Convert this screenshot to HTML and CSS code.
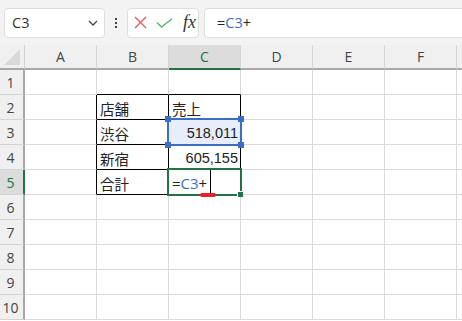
FILE: index.html
```html
<!DOCTYPE html>
<html>
<head>
<title>Sheet</title>
<link rel="stylesheet" href="styles.css">
</head>
<body>

<div class="toolbar">
  <div class="namebox">
    <span>C3</span>
    <svg class="chev" width="10" height="6" viewBox="0 0 10 6"><path d="M1 1 L5 5 L9 1" fill="none" stroke="#444" stroke-width="1.3"/></svg>
  </div>
  <div class="dots"><i></i><i></i><i></i></div>
  <div class="iconbox">
    <svg width="13" height="13" viewBox="0 0 13 13"><path d="M1 1 L12 12 M12 1 L1 12" stroke="#e35d5d" stroke-width="1.4"/></svg>
    <svg width="17" height="10" viewBox="0 0 17 10"><path d="M1 4.5 L5.5 9 L16 0.8" fill="none" stroke="#5cb56b" stroke-width="1.4"/></svg>
    <span class="fx">fx</span>
  </div>
  <div class="formula">=<span class="ref">C3</span>+</div>
</div>

<div class="sheet">
  <div class="corner"><span class="tri"></span></div>
  <div class="colhead">A</div>
  <div class="colhead">B</div>
  <div class="colhead active">C</div>
  <div class="colhead">D</div>
  <div class="colhead">E</div>
  <div class="colhead">F</div>
  <div class="colhead rest"></div>

  <div class="rowhead">1</div>
  <div class="cell"></div><div class="cell bb"></div><div class="cell bb"></div><div class="cell"></div><div class="cell"></div><div class="cell"></div><div class="cell rest"></div>

  <div class="rowhead">2</div>
  <div class="cell br"></div><div class="cell box">店舗</div><div class="cell box">売上</div><div class="cell"></div><div class="cell"></div><div class="cell"></div><div class="cell rest"></div>

  <div class="rowhead">3</div>
  <div class="cell br"></div><div class="cell box">渋谷</div><div class="cell box num selected">518,011<span class="sel"><i class="h tl"></i><i class="h tr"></i><i class="h bl"></i><i class="h brc"></i></span></div><div class="cell"></div><div class="cell"></div><div class="cell"></div><div class="cell rest"></div>

  <div class="rowhead">4</div>
  <div class="cell br"></div><div class="cell box">新宿</div><div class="cell box num">605,155</div><div class="cell"></div><div class="cell"></div><div class="cell"></div><div class="cell rest"></div>

  <div class="rowhead active">5</div>
  <div class="cell br"></div><div class="cell box">合計</div><div class="cell box editing"><span class="edit">=<span class="ref">C3</span>+</span><span class="act"><i class="fill"></i></span><span class="squiggle"></span></div><div class="cell"></div><div class="cell"></div><div class="cell"></div><div class="cell rest"></div>

  <div class="rowhead">6</div>
  <div class="cell"></div><div class="cell"></div><div class="cell"></div><div class="cell"></div><div class="cell"></div><div class="cell"></div><div class="cell rest"></div>

  <div class="rowhead">7</div>
  <div class="cell"></div><div class="cell"></div><div class="cell"></div><div class="cell"></div><div class="cell"></div><div class="cell"></div><div class="cell rest"></div>

  <div class="rowhead">8</div>
  <div class="cell"></div><div class="cell"></div><div class="cell"></div><div class="cell"></div><div class="cell"></div><div class="cell"></div><div class="cell rest"></div>

  <div class="rowhead">9</div>
  <div class="cell"></div><div class="cell"></div><div class="cell"></div><div class="cell"></div><div class="cell"></div><div class="cell"></div><div class="cell rest"></div>

  <div class="rowhead">10</div>
  <div class="cell"></div><div class="cell"></div><div class="cell"></div><div class="cell"></div><div class="cell"></div><div class="cell"></div><div class="cell rest"></div>
</div>

</body>
</html>
```

FILE: styles.css
```css
* {
  box-sizing: border-box;
}

body {
  margin: 0;
  width: 462px;
  height: 321px;
  overflow: hidden;
  background: #ffffff;
  font-family: "Liberation Sans", "Noto Sans CJK JP", sans-serif;
  color: #222;
}

.toolbar {
  height: 45px;
  background: #f3f3f3;
  display: flex;
  align-items: center;
  padding-left: 4px;
}

.namebox {
  width: 101px;
  height: 30px;
  background: #fff;
  border: 1px solid #dedede;
  border-radius: 4px;
  display: flex;
  align-items: center;
  justify-content: space-between;
  padding: 0 6px 0 7px;
  font-size: 15px;
  color: #333;
}

.namebox span {
  font-family: "Open Sans", sans-serif;
  font-size: 14.5px;
}

.dots {
  width: 22px;
  display: flex;
  flex-direction: column;
  align-items: center;
  gap: 2px;
}

.dots i {
  width: 2px;
  height: 2px;
  background: #444;
}

.iconbox {
  width: 72px;
  height: 30px;
  background: #fff;
  border: 1px solid #dedede;
  border-radius: 4px;
  display: flex;
  align-items: center;
  padding-left: 6px;
  gap: 9px;
}

.fx {
  font-family: "Liberation Serif", serif;
  font-style: italic;
  font-size: 18px;
  color: #333;
  margin-left: 1px;
}

.formula {
  flex: 1;
  height: 30px;
  margin-left: 5px;
  background: #fff;
  border: 1px solid #dedede;
  border-right: none;
  border-radius: 4px 0 0 4px;
  display: flex;
  align-items: center;
  padding-left: 12px;
  font-family: "Open Sans", sans-serif;
  font-size: 14.5px;
  color: #222;
}

.ref {
  color: #3a6fc4;
}

.sheet {
  display: grid;
  grid-template-columns: 25px repeat(6, 72px) 1fr;
  grid-template-rows: 25px repeat(10, 25px) 1fr;
}

.corner {
  background: #f0f0f0;
  border-right: 1px solid #d0d0d0;
  border-bottom: 2px solid #a8a8a8;
  position: relative;
}

.tri {
  position: absolute;
  right: 4px;
  bottom: 3px;
  width: 0;
  height: 0;
  border-left: 16px solid transparent;
  border-bottom: 16px solid #d9d9d9;
}

.colhead {
  background: #f0f0f0;
  border-right: 1px solid #d4d4d4;
  border-bottom: 2px solid #a8a8a8;
  display: flex;
  align-items: center;
  justify-content: center;
  font-family: "Open Sans", sans-serif;
  font-size: 14px;
  color: #444;
}

.colhead.active {
  background: #dcdcdc;
  border-bottom: 2px solid #217346;
  color: #217346;
}

.colhead.rest {
  border-right: none;
}

.rowhead {
  background: #f0f0f0;
  border-right: 2px solid #a8a8a8;
  border-bottom: 1px solid #d4d4d4;
  display: flex;
  align-items: center;
  justify-content: center;
  padding-right: 2px;
  font-family: "Open Sans", sans-serif;
  font-size: 14px;
  color: #444;
}

.rowhead.active {
  background: #dcdcdc;
  border-right: 2px solid #217346;
  color: #217346;
}

.cell {
  border-right: 1px solid #dadada;
  border-bottom: 1px solid #dadada;
  font-size: 14.5px;
  display: flex;
  align-items: center;
  padding: 2px 3px 0 3px;
  white-space: nowrap;
  position: relative;
}

.cell.rest {
  border-right: none;
}

.cell.bb {
  border-bottom-color: #000;
}

.cell.br {
  border-right-color: #000;
}

.cell.box {
  border-right-color: #000;
  border-bottom-color: #000;
}

.cell.num {
  justify-content: flex-end;
  padding-right: 2px;
}

.cell.selected {
  background: #e8eef9;
}

.sel {
  position: absolute;
  left: -2px;
  top: -2px;
  right: -2px;
  bottom: -2px;
  border: 2px solid #3a6fc4;
  z-index: 2;
}

.h {
  position: absolute;
  width: 6px;
  height: 6px;
  background: #3a6fc4;
}

.h.tl { left: -4px; top: -4px; }
.h.tr { right: -4px; top: -4px; }
.h.bl { left: -4px; bottom: -4px; }
.h.brc { right: -4px; bottom: -4px; }

.edit {
  height: 100%;
  display: flex;
  align-items: center;
  padding-top: 2px;
  padding-right: 3px;
  border-right: 1px solid #000;
  font-family: "Open Sans", sans-serif;
  font-size: 15px;
}

.cell.editing {
  padding-top: 0;
  padding-bottom: 0;
  align-items: stretch;
}

.act {
  position: absolute;
  left: -2px;
  top: -2px;
  right: -2px;
  bottom: -2px;
  border: 2px solid #217346;
  z-index: 2;
}

.fill {
  position: absolute;
  right: -3px;
  bottom: -3px;
  width: 6px;
  height: 6px;
  background: #217346;
  border-left: 1px solid #fff;
  border-top: 1px solid #fff;
}

.squiggle {
  position: absolute;
  left: 31px;
  bottom: -3px;
  width: 16px;
  height: 4px;
  border-radius: 2px;
  background: #e8202a;
  z-index: 3;
}
```
